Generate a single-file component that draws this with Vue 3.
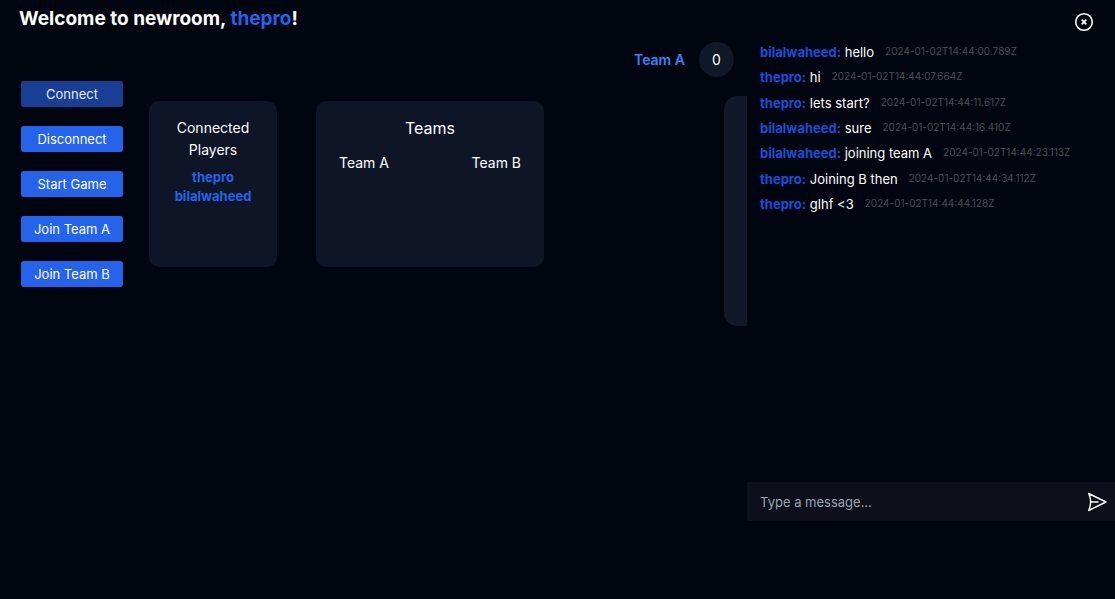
<script setup>
import { ref } from 'vue'

const room = 'newroom'
const user = 'thepro'
const draft = ref('')

const actions = [
  { label: 'Connect', disabled: true },
  { label: 'Disconnect', disabled: false },
  { label: 'Start Game', disabled: false },
  { label: 'Join Team A', disabled: false },
  { label: 'Join Team B', disabled: false },
]

const players = ['thepro', 'bilalwaheed']

const messages = [
  { from: 'bilalwaheed', text: 'hello', at: '2024-01-02T14:44:00.789Z' },
  { from: 'thepro', text: 'hi', at: '2024-01-02T14:44:07.664Z' },
  { from: 'thepro', text: 'lets start?', at: '2024-01-02T14:44:11.617Z' },
  { from: 'bilalwaheed', text: 'sure', at: '2024-01-02T14:44:16.410Z' },
  { from: 'bilalwaheed', text: 'joining team A', at: '2024-01-02T14:44:23.113Z' },
  { from: 'thepro', text: 'Joining B then', at: '2024-01-02T14:44:34.112Z' },
  { from: 'thepro', text: 'glhf <3', at: '2024-01-02T14:44:44.128Z' },
]
</script>

<template>
  <div class="page">
    <main class="room">
      <section class="lobby">
        <h1 class="title">Welcome to {{ room }}, <span class="me">{{ user }}</span>!</h1>
        <div class="panels">
          <nav class="actions" aria-label="Room actions">
            <button v-for="a in actions" :key="a.label" type="button" class="action" :disabled="a.disabled">
              {{ a.label }}
            </button>
          </nav>
          <section class="card players">
            <h2 class="players-title">Connected Players</h2>
            <ul class="names">
              <li v-for="p in players" :key="p">{{ p }}</li>
            </ul>
          </section>
          <section class="card teams">
            <h2 class="teams-title">Teams</h2>
            <div class="team-row">
              <h3 class="team">Team A</h3>
              <h3 class="team">Team B</h3>
            </div>
          </section>
        </div>
      </section>
      <section class="game">
        <div class="score">
          <span class="score-name">Team A</span>
          <span class="score-value">0</span>
        </div>
        <div class="board"></div>
      </section>
    </main>

    <aside class="chat" aria-label="Chat">
      <button type="button" class="icon-button close" aria-label="Close chat">
        <svg width="20" height="20" viewBox="0 0 20 20" fill="none" stroke="currentColor">
          <circle cx="10" cy="10" r="8.3" stroke-width="1.6" />
          <path d="M7.7 7.7l4.6 4.6M12.3 7.7l-4.6 4.6" stroke-width="1.7" />
        </svg>
      </button>
      <ul class="messages">
        <li v-for="m in messages" :key="m.at" class="message">
          <span><b class="from">{{ m.from }}:</b> {{ m.text }}</span>
          <time class="time" :datetime="m.at">{{ m.at }}</time>
        </li>
      </ul>
      <form class="composer" @submit.prevent="draft = ''">
        <input v-model="draft" class="field" type="text" placeholder="Type a message..." aria-label="Message" />
        <button type="submit" class="icon-button" aria-label="Send message">
          <svg width="20" height="20" viewBox="0 0 20 20" fill="none" stroke="currentColor" stroke-width="1.4" stroke-linejoin="round" stroke-linecap="round">
            <path d="M1.7 1.5L19 10 1.7 18.5Q5.6 10 1.7 1.5zM4 10h7" />
          </svg>
        </button>
      </form>
    </aside>
  </div>
</template>

<style>
body {
  margin: 0;
  background: #01050f;
}
</style>

<style scoped>
.page {
  display: grid;
  grid-template-columns: 67fr 33fr;
  min-height: 100vh;
  background: #01050f;
  color: #fff;
  font-family: Inter, "Liberation Sans", sans-serif;
  font-size: 14px;
}

h1, h2, h3, ul {
  margin: 0;
  padding: 0;
  font-weight: 400;
  list-style: none;
}

button, input {
  border: 0;
  font: inherit;
  color: inherit;
}

.room {
  display: flex;
  min-width: 0;
  overflow: hidden;
}

.lobby {
  flex: 0 0 544px;
}

.title {
  padding: 7px 0 0 19px;
  font-size: 19px;
  line-height: 24px;
  font-weight: 700;
}

.me {
  color: #2563eb;
}

.panels {
  display: flex;
  align-items: flex-start;
  padding: 50px 0 0 21px;
}

.actions {
  display: flex;
  flex-direction: column;
  gap: 19px;
  width: 102px;
}

.action {
  height: 26px;
  padding: 0 0 1px;
  border-radius: 3px;
  background: #2563eb;
  font-size: 13px;
}

.action:disabled {
  background: #193f94;
  color: #e5e7eb;
}

.card {
  box-sizing: border-box;
  min-height: 166px;
  margin-top: 20px;
  border-radius: 10px;
  background: #0d1526;
  text-align: center;
}

.players {
  width: 128px;
  margin-left: 26px;
  padding: 16px 20px;
}

.players-title {
  font-size: 14px;
  line-height: 22px;
}

.names {
  margin-top: 7px;
  color: #2563eb;
  font-size: 13px;
  line-height: 19px;
  font-weight: 700;
}

.teams {
  width: 228px;
  margin-left: 39px;
  padding: 16px 23px;
}

.teams-title {
  font-size: 16px;
  line-height: 22px;
}

.team-row {
  display: flex;
  justify-content: space-between;
  margin-top: 13px;
}

.team {
  font-size: 14px;
  line-height: 22px;
}

.game {
  flex: 0 0 410px;
  padding: 42px 0 0 90px;
}

.score {
  display: flex;
  align-items: center;
  gap: 14px;
}

.score-name {
  color: #3b82f6;
  font-weight: 600;
}

.score-value {
  width: 35px;
  border-radius: 50%;
  background: #111827;
  line-height: 35px;
  text-align: center;
}

.board {
  height: 230px;
  margin: 19px 0 0 90px;
  border-radius: 13px;
  background: #111827;
}

.chat {
  display: flex;
  flex-direction: column;
  min-width: 0;
}

.icon-button {
  display: block;
  padding: 0;
  background: none;
}

.icon-button svg {
  display: block;
}

.close {
  align-self: flex-end;
  margin: 12px 21px 0 0;
}

.messages {
  display: grid;
  grid-auto-rows: 1fr;
  height: 178px;
  margin: 7px 0 0 13px;
  font-size: 13px;
}

.message {
  display: flex;
  align-items: center;
  gap: 11px;
  line-height: 20px;
  white-space: nowrap;
}

.from {
  color: #1d4ed8;
  font-weight: 700;
}

.time {
  padding-bottom: 2px;
  color: #4b4f57;
  font-size: 10px;
}

.composer {
  display: flex;
  align-items: center;
  margin: auto 0 78px;
  padding-right: 8px;
  background: #0d0f1a;
}

.field {
  flex: 1;
  min-width: 0;
  height: 39px;
  padding: 0 13px;
  background: none;
  font-size: 13px;
  outline: none;
}

.field::placeholder {
  color: #9ca3af;
}
</style>
